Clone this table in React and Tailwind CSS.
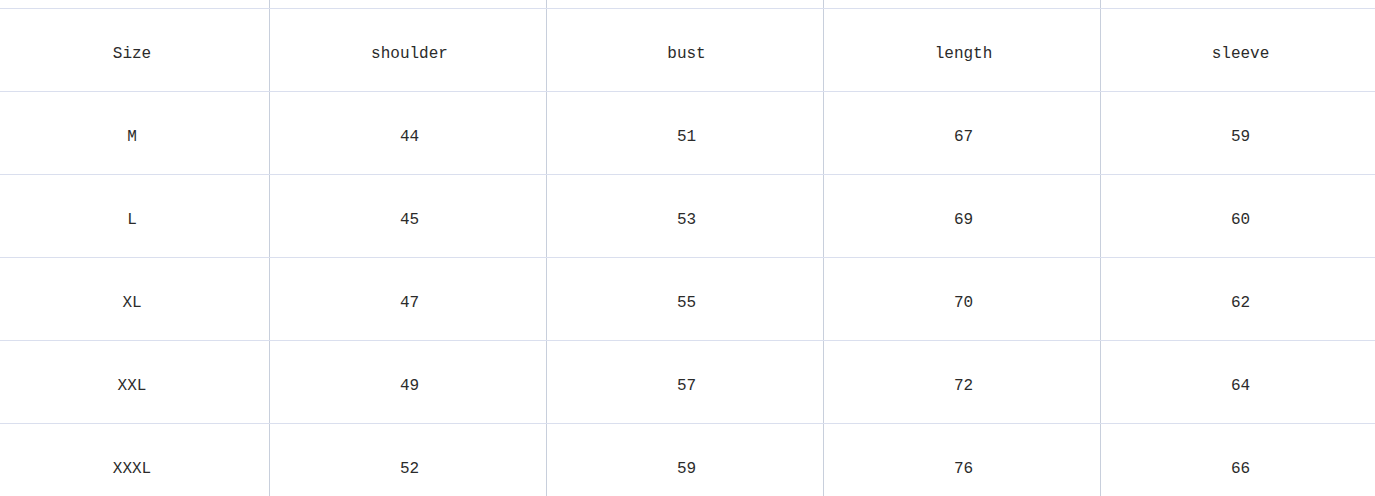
import React from "react";

const header = ["Size", "shoulder", "bust", "length", "sleeve"];
const rows = [
  ["M", "44", "51", "67", "59"],
  ["L", "45", "53", "69", "60"],
  ["XL", "47", "55", "70", "62"],
  ["XXL", "49", "57", "72", "64"],
  ["XXXL", "52", "59", "76", "66"],
];

function Row({ cells, height = "h-[83px]", top = true }) {
  return (
    <div className={`flex ${height} ${top ? "border-t border-[#dadfee]" : ""}`}>
      {cells.map((c, i) => (
        <div
          key={i}
          className={`w-[277px] shrink-0 flex items-center justify-center pl-[3px] pt-[8px] ${
            i > 0 ? "border-l border-[#c8cfdc]" : ""
          }`}
        >
          {c}
        </div>
      ))}
    </div>
  );
}

export default function App() {
  return (
    <div className="w-[1375px] h-[496px] overflow-hidden bg-white">
      <div
        className="-ml-[8px] w-[1385px] text-[16px] text-[#2b2b2b]"
        style={{ fontFamily: '"Liberation Mono", "DejaVu Sans Mono", monospace' }}
      >
        <Row cells={["", "", "", "", ""]} height="h-[8px]" top={false} />
        <Row cells={header} />
        {rows.map((r, i) => (
          <Row key={i} cells={r} />
        ))}
      </div>
    </div>
  );
}
